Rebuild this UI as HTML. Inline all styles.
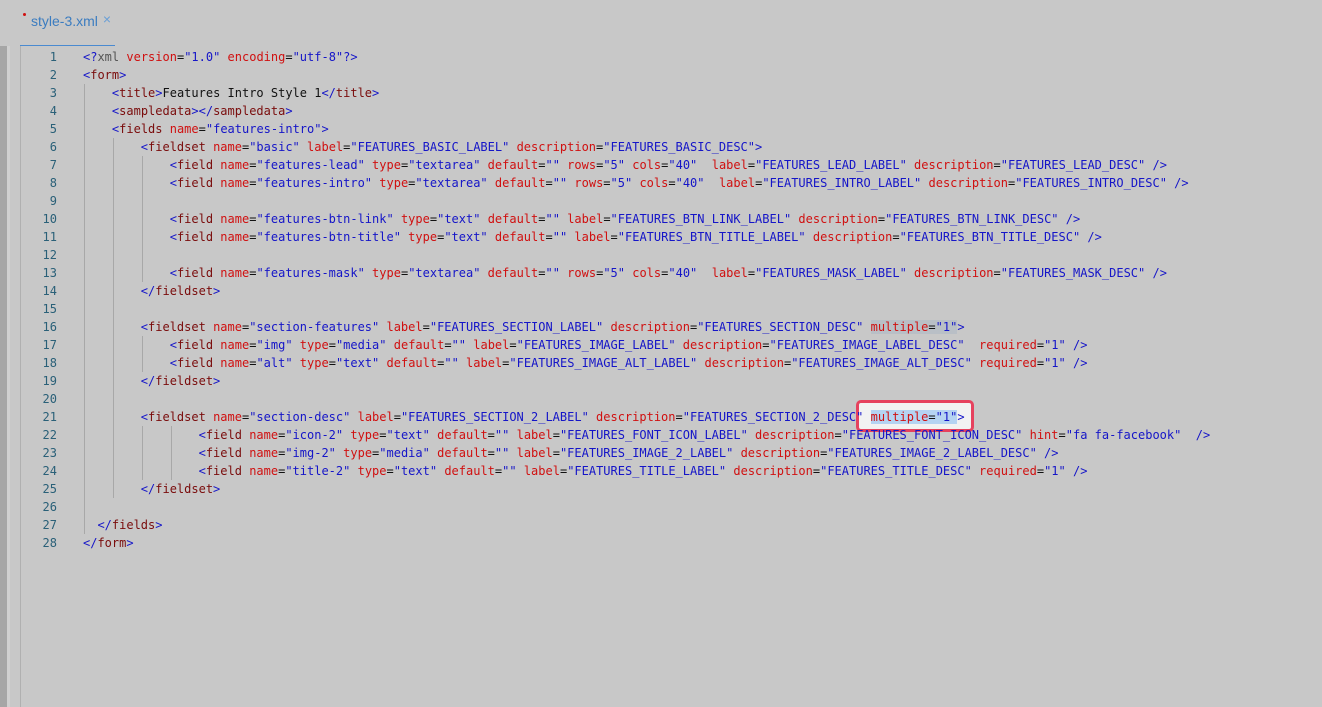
<!DOCTYPE html>
<html><head><meta charset="utf-8"><style>
html,body{margin:0;padding:0;width:1322px;height:707px;overflow:hidden;background:#c8c8c8;font-family:"Liberation Sans",sans-serif}
.strip{position:absolute;left:0;top:46px;width:7px;height:661px;background:#a6a6a6}
.strip2{position:absolute;left:7px;top:46px;width:3px;height:661px;background:#d0d0d0}
.gl{position:absolute;left:20px;top:46px;width:1px;height:661px;background:#b0b0b0}
.tab{position:absolute;left:31px;top:13px;font-size:14px;color:#3b7cc0}
.tab .x{color:#6a9fd6;font-size:14px;margin-left:5px;position:relative;top:-2px}
.dot{position:absolute;left:23px;top:13px;width:3px;height:3px;border-radius:2px;background:#d01010}
.ul{position:absolute;left:20px;top:45px;width:95px;height:1px;background:#4a8ad0}
.nums{position:absolute;left:20px;top:48px;width:37px;text-align:right;font-family:"DejaVu Sans Mono",monospace;font-size:12px;line-height:18px;color:#2a6078}
pre{position:absolute;left:83px;top:48px;margin:0;font-family:"DejaVu Sans Mono",monospace;font-size:12px;line-height:18px;color:#111}
b,s,u{font-weight:normal;text-decoration:none}
b{color:#1515c8}s{color:#7a0c0c}u{color:#d01010}
.g{position:absolute;width:1px;background:#a8a8a8}
.hl1{background:#b9bfc6}
.sel{background:#b5d3f2}
.box{position:absolute;left:856px;top:400px;width:112px;height:26px;border:3px solid #e6425e;border-radius:5px;background:#f2f2f2}
</style></head><body>
<div class="dot"></div>
<div class="tab">style-3.xml<span class="x">×</span></div>
<div class="ul"></div>
<div class="strip"></div><div class="strip2"></div><div class="gl"></div>
<div class="g" style="left:84px;top:84px;height:450px"></div>
<div class="g" style="left:113px;top:138px;height:360px"></div>
<div class="g" style="left:142px;top:156px;height:126px"></div>
<div class="g" style="left:142px;top:336px;height:36px"></div>
<div class="g" style="left:142px;top:426px;height:54px"></div>
<div class="g" style="left:171px;top:426px;height:54px"></div>
<div class="box"></div>
<div class="nums">1<br>2<br>3<br>4<br>5<br>6<br>7<br>8<br>9<br>10<br>11<br>12<br>13<br>14<br>15<br>16<br>17<br>18<br>19<br>20<br>21<br>22<br>23<br>24<br>25<br>26<br>27<br>28</div>
<pre><b>&lt;?</b><span style="color:#555">xml</span> <u>version</u>=<b>"1.0"</b> <u>encoding</u>=<b>"utf-8"?&gt;</b>
<b>&lt;</b><s>form</s><b>&gt;</b>
    <b>&lt;</b><s>title</s><b>&gt;</b>Features Intro Style 1<b>&lt;/</b><s>title</s><b>&gt;</b>
    <b>&lt;</b><s>sampledata</s><b>&gt;&lt;/</b><s>sampledata</s><b>&gt;</b>
    <b>&lt;</b><s>fields</s> <u>name</u>=<b>"features-intro"</b><b>&gt;</b>
        <b>&lt;</b><s>fieldset</s> <u>name</u>=<b>"basic"</b> <u>label</u>=<b>"FEATURES_BASIC_LABEL"</b> <u>description</u>=<b>"FEATURES_BASIC_DESC"</b><b>&gt;</b>
            <b>&lt;</b><s>field</s> <u>name</u>=<b>"features-lead"</b> <u>type</u>=<b>"textarea"</b> <u>default</u>=<b>""</b> <u>rows</u>=<b>"5"</b> <u>cols</u>=<b>"40"</b>  <u>label</u>=<b>"FEATURES_LEAD_LABEL"</b> <u>description</u>=<b>"FEATURES_LEAD_DESC"</b> <b>/&gt;</b>
            <b>&lt;</b><s>field</s> <u>name</u>=<b>"features-intro"</b> <u>type</u>=<b>"textarea"</b> <u>default</u>=<b>""</b> <u>rows</u>=<b>"5"</b> <u>cols</u>=<b>"40"</b>  <u>label</u>=<b>"FEATURES_INTRO_LABEL"</b> <u>description</u>=<b>"FEATURES_INTRO_DESC"</b> <b>/&gt;</b>

            <b>&lt;</b><s>field</s> <u>name</u>=<b>"features-btn-link"</b> <u>type</u>=<b>"text"</b> <u>default</u>=<b>""</b> <u>label</u>=<b>"FEATURES_BTN_LINK_LABEL"</b> <u>description</u>=<b>"FEATURES_BTN_LINK_DESC"</b> <b>/&gt;</b>
            <b>&lt;</b><s>field</s> <u>name</u>=<b>"features-btn-title"</b> <u>type</u>=<b>"text"</b> <u>default</u>=<b>""</b> <u>label</u>=<b>"FEATURES_BTN_TITLE_LABEL"</b> <u>description</u>=<b>"FEATURES_BTN_TITLE_DESC"</b> <b>/&gt;</b>

            <b>&lt;</b><s>field</s> <u>name</u>=<b>"features-mask"</b> <u>type</u>=<b>"textarea"</b> <u>default</u>=<b>""</b> <u>rows</u>=<b>"5"</b> <u>cols</u>=<b>"40"</b>  <u>label</u>=<b>"FEATURES_MASK_LABEL"</b> <u>description</u>=<b>"FEATURES_MASK_DESC"</b> <b>/&gt;</b>
        <b>&lt;/</b><s>fieldset</s><b>&gt;</b>

        <b>&lt;</b><s>fieldset</s> <u>name</u>=<b>"section-features"</b> <u>label</u>=<b>"FEATURES_SECTION_LABEL"</b> <u>description</u>=<b>"FEATURES_SECTION_DESC"</b> <span class="hl1"><u>multiple</u>=<b>"1"</b></span><b>&gt;</b>
            <b>&lt;</b><s>field</s> <u>name</u>=<b>"img"</b> <u>type</u>=<b>"media"</b> <u>default</u>=<b>""</b> <u>label</u>=<b>"FEATURES_IMAGE_LABEL"</b> <u>description</u>=<b>"FEATURES_IMAGE_LABEL_DESC"</b>  <u>required</u>=<b>"1"</b> <b>/&gt;</b>
            <b>&lt;</b><s>field</s> <u>name</u>=<b>"alt"</b> <u>type</u>=<b>"text"</b> <u>default</u>=<b>""</b> <u>label</u>=<b>"FEATURES_IMAGE_ALT_LABEL"</b> <u>description</u>=<b>"FEATURES_IMAGE_ALT_DESC"</b> <u>required</u>=<b>"1"</b> <b>/&gt;</b>
        <b>&lt;/</b><s>fieldset</s><b>&gt;</b>

        <b>&lt;</b><s>fieldset</s> <u>name</u>=<b>"section-desc"</b> <u>label</u>=<b>"FEATURES_SECTION_2_LABEL"</b> <u>description</u>=<b>"FEATURES_SECTION_2_DESC"</b> <span class="sel"><u>multiple</u>=<b>"1"</b></span><b>&gt;</b>
                <b>&lt;</b><s>field</s> <u>name</u>=<b>"icon-2"</b> <u>type</u>=<b>"text"</b> <u>default</u>=<b>""</b> <u>label</u>=<b>"FEATURES_FONT_ICON_LABEL"</b> <u>description</u>=<b>"FEATURES_FONT_ICON_DESC"</b> <u>hint</u>=<b>"fa fa-facebook"</b>  <b>/&gt;</b>
                <b>&lt;</b><s>field</s> <u>name</u>=<b>"img-2"</b> <u>type</u>=<b>"media"</b> <u>default</u>=<b>""</b> <u>label</u>=<b>"FEATURES_IMAGE_2_LABEL"</b> <u>description</u>=<b>"FEATURES_IMAGE_2_LABEL_DESC"</b> <b>/&gt;</b>
                <b>&lt;</b><s>field</s> <u>name</u>=<b>"title-2"</b> <u>type</u>=<b>"text"</b> <u>default</u>=<b>""</b> <u>label</u>=<b>"FEATURES_TITLE_LABEL"</b> <u>description</u>=<b>"FEATURES_TITLE_DESC"</b> <u>required</u>=<b>"1"</b> <b>/&gt;</b>
        <b>&lt;/</b><s>fieldset</s><b>&gt;</b>

  <b>&lt;/</b><s>fields</s><b>&gt;</b>
<b>&lt;/</b><s>form</s><b>&gt;</b></pre>
</body></html>
